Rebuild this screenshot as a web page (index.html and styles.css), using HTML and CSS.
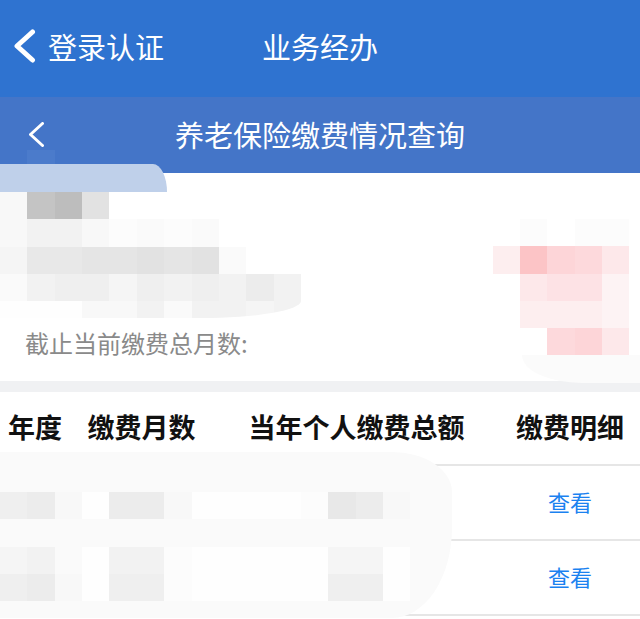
FILE: index.html
```html
<!DOCTYPE html>
<html lang="zh-CN">
<head>
<meta charset="utf-8">
<title>养老保险缴费情况查询</title>
<link rel="stylesheet" href="styles.css">
</head>
<body>
<div class="page">
  <header class="topbar">
    <svg class="back-main" width="22" height="34" viewBox="0 0 22 34"><polyline points="18.5,3 3,17 18.5,31" fill="none" stroke="#fff" stroke-width="5" stroke-linecap="round" stroke-linejoin="round"/></svg>
    <span class="top-link">登录认证</span>
    <span class="top-title">业务经办</span>
  </header>

  <div class="subbar">
    <svg class="back-sub" width="15" height="25" viewBox="0 0 15 25"><polyline points="13.5,1.5 1.5,12.5 13.5,23.5" fill="none" stroke="#fff" stroke-width="3" stroke-linecap="round" stroke-linejoin="round"/></svg>
    <h1 class="sub-title">养老保险缴费情况查询</h1>
    <span></span>
  </div>

  <section class="info">
    <div class="info-row"></div>
    <div class="info-row"></div>
    <div class="info-row"></div>
    <div class="info-row"><span class="info-label">截止当前缴费总月数:</span></div>
  </section>

  <div class="divider"></div>

  <section class="table">
    <div class="tr th">
      <span>年度</span><span>缴费月数</span><span>当年个人缴费总额</span><span>缴费明细</span>
    </div>
    <div class="tr">
      <span></span><span></span><span></span><a class="link">查看</a>
    </div>
    <div class="tr">
      <span></span><span></span><span></span><a class="link">查看</a>
    </div>
  </section>

  <!-- redaction mosaics lying over the content -->
  <div class="blot-blue"></div>
  <div class="tile-blue"></div>

  <div class="mosaic m-info">
    <i class="gj"></i><i class="gb"></i><i class="ga"></i><i class="gc"></i><i></i><i></i><i></i><i></i><i></i><i></i><i></i>
    <i class="gj"></i><i class="gh"></i><i class="gh"></i><i class="gj"></i><i class="gl"></i><i class="gk"></i><i class="gl"></i><i class="gk"></i><i></i><i></i><i></i>
    <i class="gi"></i><i class="ge"></i><i class="ge"></i><i class="gd"></i><i class="gd"></i><i class="gc"></i><i class="gd"></i><i class="gc"></i><i class="gk"></i><i></i><i></i>
    <i class="gk"></i><i class="gh"></i><i class="gg"></i><i class="gg"></i><i class="gi"></i><i class="gg"></i><i class="gh"></i><i class="gg"></i><i class="gh"></i><i class="gf"></i><i class="gh"></i>
  </div>
  <div class="mosaic m-info-tail">
    <i class="gm"></i><i class="gm"></i><i class="gm"></i><i class="gj"></i><i class="gj"></i><i class="gh"></i><i class="gk"></i><i class="gh"></i><i class="gh"></i><i class="gi"></i><i class="gh"></i>
  </div>

  <div class="mosaic m-pink">
    <i></i><i class="gl"></i><i></i><i class="gl"></i><i class="gl"></i>
    <i class="p6"></i><i class="p1"></i><i class="p2"></i><i class="p3"></i><i class="p5"></i>
    <i></i><i class="p5"></i><i class="p4"></i><i class="p4"></i><i class="p7"></i>
    <i></i><i class="p6"></i><i class="p6"></i><i class="p6"></i><i class="p7"></i>
    <i></i><i></i><i class="p3"></i><i class="p2"></i><i class="p5"></i>
  </div>
  <div class="blot-right"></div>

  <div class="blot-table"></div>
  <div class="mosaic m-table">
    <i class="gg"></i><i class="gf"></i><i class="gj"></i><i class="gm"></i><i class="gf"></i><i class="gf"></i><i class="gj"></i><i class="gm"></i><i class="gm"></i><i class="gm"></i><i class="gm"></i><i class="gl"></i><i class="ge"></i><i class="gf"></i><i class="gj"></i>
    <i></i><i></i><i></i><i></i><i></i><i></i><i></i><i></i><i></i><i></i><i></i><i></i><i></i><i></i><i></i>
    <i class="gi"></i><i class="gh"></i><i class="gk"></i><i class="gm"></i><i class="gh"></i><i class="gh"></i><i class="gl"></i><i class="gm"></i><i class="gm"></i><i class="gm"></i><i class="gm"></i><i class="gm"></i><i class="gi"></i><i class="gi"></i><i class="gm"></i>
    <i class="gg"></i><i class="gf"></i><i class="gj"></i><i class="gm"></i><i class="gg"></i><i class="gg"></i><i class="gl"></i><i class="gm"></i><i class="gm"></i><i class="gm"></i><i class="gm"></i><i class="gm"></i><i class="gg"></i><i class="gg"></i><i class="gm"></i>
  </div>
</div>
</body>
</html>
```
FILE: styles.css
```css
* { box-sizing: border-box; }
html, body { margin: 0; padding: 0; }
body {
  width: 640px;
  height: 619px;
  overflow: hidden;
  background: #fff;
  font-family: "Noto Sans CJK SC", "Noto Sans", sans-serif;
}
.page { position: relative; width: 640px; height: 619px; overflow: hidden; }

.topbar {
  height: 97px;
  background: #2f73d0;
  display: flex;
  align-items: center;
  padding: 0 0 5px 14px;
  color: #fff;
}
.back-main { display: block; flex: none; }
.top-link { font-size: 29px; margin-left: 12px; line-height: 1; }
.top-title { font-size: 29px; margin-left: 98px; line-height: 1; }

.subbar {
  height: 76px;
  background: #4475c8;
  display: grid;
  grid-template-columns: 1fr auto 1fr;
  align-items: center;
  padding-left: 29px;
  padding-bottom: 2px;
}
.back-sub { display: block; }
.sub-title {
  margin: 0;
  font-size: 29px;
  font-weight: 400;
  color: #fff;
  line-height: 1;
  margin-left: -29px;
}

.info {
  height: 208px;
  padding: 7px 25px 13px;
}
.info-row { height: 47px; display: flex; align-items: center; padding-bottom: 3px; }
.info-label { font-size: 24px; color: #8a8a8a; line-height: 1; }

.divider { height: 11px; background: #f0f1f3; }

.table { background: #fff; }
.tr {
  display: grid;
  grid-template-columns: 70px 143px 287px 140px;
  height: 75px;
  align-items: center;
  justify-items: center;
  border-bottom: 2px solid #e6e6e6;
  padding-bottom: 3px;
}
.tr.th { height: 74px; font-size: 27px; font-weight: 700; color: #111; padding-bottom: 4px; }
.tr.th span { line-height: 1; }
.link { font-size: 22px; color: #1b82f0; line-height: 1; }

/* redaction overlays */
.blot-blue {
  position: absolute; left: 0; top: 164px; width: 167px; height: 28px;
  background: #bfd0ea;
  border-top-right-radius: 14px 28px;
}
.tile-blue {
  position: absolute; left: 27px; top: 150px; width: 28px; height: 14px;
  background: #4b7bcb;
}
.mosaic {
  position: absolute;
  display: grid;
  grid-auto-rows: 27.3px;
}
.mosaic i { display: block; }
.m-info { left: 0; top: 192px; grid-template-columns: repeat(11, 27.36px); }
.m-info-tail {
  left: 0; top: 301px; grid-template-columns: repeat(11, 27.36px);
  grid-auto-rows: 17px; overflow: hidden;
  border-bottom-right-radius: 100px 17px;
}
.m-pink { left: 492.5px; top: 219px; grid-template-columns: repeat(5, 27.36px); }
.blot-right {
  position: absolute; left: 522px; top: 355px; width: 118px; height: 28px;
  background: #fbfbfb;
  border-bottom-left-radius: 60px 28px;
}
.blot-table {
  position: absolute; left: 0; top: 452px; width: 452px; height: 166px;
  background: #fafafa;
  border-top-right-radius: 60px 40px;
  border-bottom-right-radius: 60px 90px;
}
.m-table { left: 0; top: 492px; grid-template-columns: repeat(15, 27.36px); }

.ga { background: #bdbdbd; }
.gb { background: #c4c4c4; }
.gc { background: #e2e2e2; }
.gd { background: #e5e5e5; }
.ge { background: #e8e8e8; }
.gf { background: #ececec; }
.gg { background: #efefef; }
.gh { background: #f2f2f2; }
.gi { background: #f5f5f5; }
.gj { background: #f8f8f8; }
.gk { background: #fafafa; }
.gl { background: #fcfcfc; }
.gm { background: #fefefe; }
.p1 { background: #fcc4c6; }
.p2 { background: #fdd5d8; }
.p3 { background: #fdd9dc; }
.p4 { background: #fde2e5; }
.p5 { background: #fde8ea; }
.p6 { background: #fdeeef; }
.p7 { background: #fdf3f4; }
```
